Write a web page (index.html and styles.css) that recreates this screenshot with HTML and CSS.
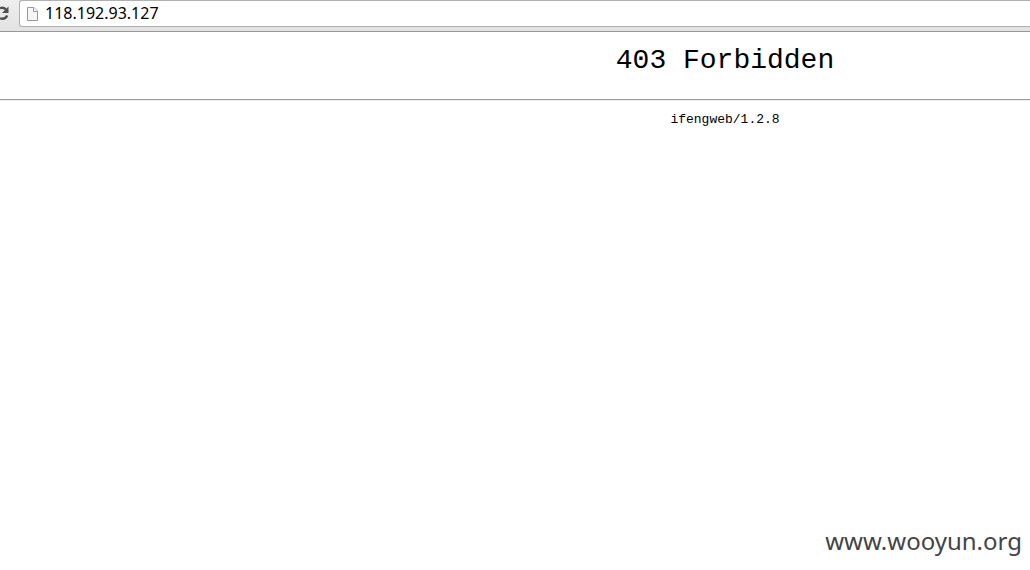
FILE: index.html
```html
<!DOCTYPE html>
<html lang="en">
<head>
<meta charset="utf-8">
<title>403 Forbidden</title>
<link rel="stylesheet" href="styles.css">
</head>
<body>
<header class="toolbar">
  <button class="reload" type="button" aria-label="Reload">
    <svg width="9" height="16" viewBox="0 0 9 16" fill="none"><path d="M0 3.200C3 2 5 3 6.200 5M0 13.300C3.400 14.400 6 13 7.200 10.400" stroke="#505050" stroke-width="2.400"/><path d="M8.500 1.500V8H2Z" fill="#505050"/></svg>
  </button>
  <label class="omnibox">
    <svg width="13" height="16" viewBox="0 0 13 16"><path d="M1.500 1.500H8L11.500 5V14.500H1.500Z" fill="#f5f5f5" stroke="#999"/><path d="M7.500 1.500V5.500H11.500" fill="#fff" stroke="#999"/></svg>
    <input class="address" type="text" value="118.192.93.127" aria-label="Address" spellcheck="false">
  </label>
</header>
<main class="page">
  <h1 class="title">403 Forbidden</h1>
  <hr class="rule">
  <p class="server">ifengweb/1.2.8</p>
</main>
<footer class="watermark">www.wooyun.org</footer>
</body>
</html>
```
FILE: styles.css
```css
* {
  box-sizing: border-box;
}

body {
  margin: 0;
  min-height: 100vh;
  display: flex;
  flex-direction: column;
  background: #fff;
  color: #000;
}

.toolbar {
  display: flex;
  height: 32px;
  padding-bottom: 4px;
  border-bottom: 1px solid #989898;
  background: linear-gradient(#efefef, #e2e2e2);
}

.reload {
  width: 19px;
  padding: 5px 0 0;
  border: 0;
  background: none;
  display: flex;
  align-items: flex-start;
}

.omnibox {
  flex: 1;
  display: flex;
  align-items: center;
  gap: 6px;
  padding-left: 6px;
  border: 1px solid #b0b0b0;
  border-right: 0;
  border-radius: 3px 0 0 3px;
  background: #fff;
}

.address {
  flex: 1;
  min-width: 0;
  padding: 0 0 2px;
  border: 0;
  outline: 0;
  background: none;
  color: #000;
  font: 16px/22px "Noto Sans", "Open Sans", sans-serif;
}

.page {
  flex: 1;
  text-align: center;
  font-family: "Liberation Mono", monospace;
}

.title {
  margin: 0;
  padding: 13px 0 22px 420px;
  font-size: 28px;
  line-height: 32px;
  font-weight: 400;
}

.rule {
  margin: 0;
  border: 0;
  border-top: 1px solid #999;
  border-bottom: 1px solid #eee;
}

.server {
  margin: 0;
  padding: 11px 0 0 420px;
  font-size: 13px;
  line-height: 16px;
}

.watermark {
  padding: 0 8px 12px;
  text-align: right;
  color: #444;
  font: 24px/34px "Noto Sans", "Open Sans", sans-serif;
}
```
